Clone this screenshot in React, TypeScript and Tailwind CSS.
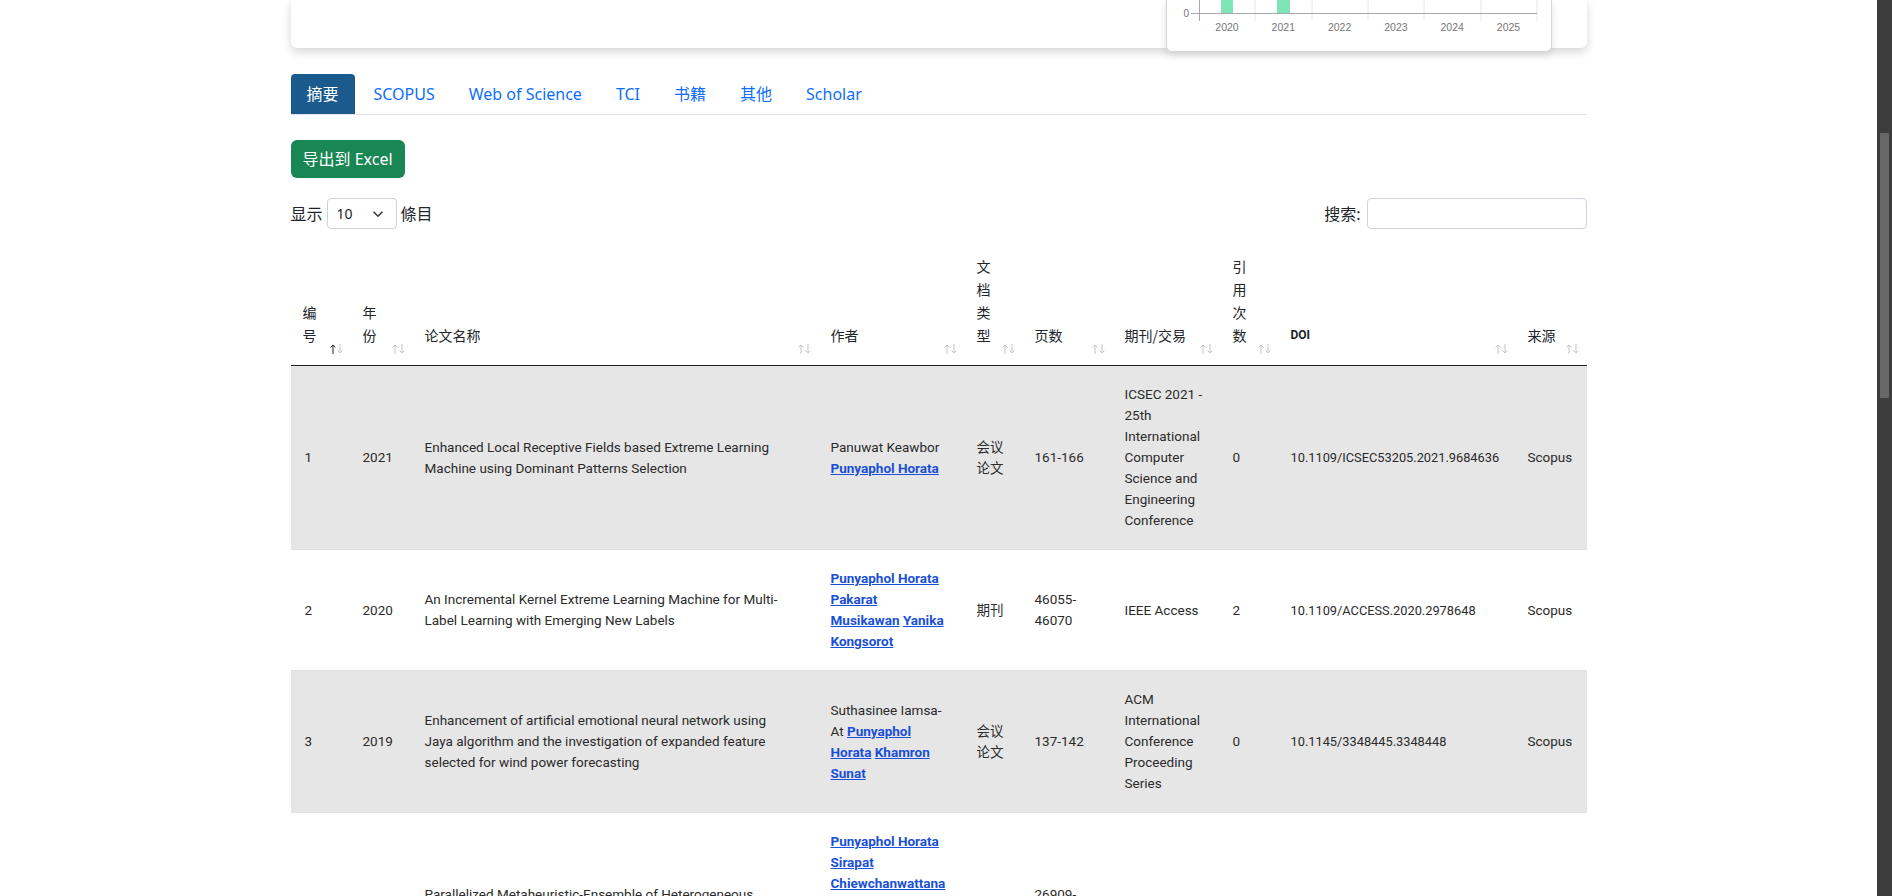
import React from "react";

const UI = "font-['Noto_Sans','Noto_Sans_CJK_SC',sans-serif]";
const BODY = "font-['Roboto','Noto_Sans_CJK_SC',sans-serif]";

function A({ children }: { children: React.ReactNode }) {
  return <a className="font-bold text-[#1a4fd8] underline">{children}</a>;
}

function SortIcon({ active }: { active?: boolean }) {
  return (
    <span className="absolute right-[8px] bottom-[11px] flex gap-[1px]">
      <svg width="6" height="10" viewBox="0 0 6 10" fill="none" strokeWidth="1">
        <path d="M3 10V1M0.6 3.4L3 1l2.4 2.4" stroke={active ? "#222" : "#c4c4c4"} />
      </svg>
      <svg width="6" height="10" viewBox="0 0 6 10" fill="none" strokeWidth="1">
        <path d="M3 0v9M0.6 6.6L3 9l2.4-2.4" stroke="#c4c4c4" />
      </svg>
    </span>
  );
}

function Chart() {
  const grid = [32, 88, 145, 201, 257, 314, 370];
  const years = ["2020", "2021", "2022", "2023", "2024", "2025"];
  return (
    <svg width="384" height="51" viewBox="0 0 384 51">
      {grid.slice(1).map((x) => (
        <line key={x} x1={x} y1="0" x2={x} y2="21" stroke="#e6e6e6" />
      ))}
      <rect x="54" y="0" width="12" height="13" fill="#7ee6b6" />
      <rect x="110" y="0" width="13" height="13" fill="#7ee6b6" />
      <line x1="32.5" y1="0" x2="32.5" y2="21" stroke="#a8a8a8" />
      <line x1="24" y1="13.5" x2="370" y2="13.5" stroke="#a8a8a8" />
      <text x="22" y="17" textAnchor="end" fontSize="10" fill="#777" fontFamily="Liberation Sans, sans-serif">
        0
      </text>
      {years.map((y, i) => (
        <text
          key={y}
          x={60 + i * 56.3}
          y="31"
          textAnchor="middle"
          fontSize="10.5"
          fill="#777"
          fontFamily="Liberation Sans, sans-serif"
        >
          {y}
        </text>
      ))}
    </svg>
  );
}

type Row = {
  no: number;
  year: number;
  title: React.ReactNode;
  authors: React.ReactNode;
  type: React.ReactNode;
  pages: string;
  journal: string;
  cites: number;
  doi: string;
  src: string;
};

const rows: Row[] = [
  {
    no: 1,
    year: 2021,
    title: (
      <>
        Enhanced Local Receptive Fields based Extreme Learning
        <br />
        Machine using Dominant Patterns Selection
      </>
    ),
    authors: (
      <>
        Panuwat Keawbor
        <br />
        <A>Punyaphol Horata</A>
      </>
    ),
    type: "会议论文",
    pages: "161-166",
    journal: "ICSEC 2021 - 25th International Computer Science and Engineering Conference",
    cites: 0,
    doi: "10.1109/ICSEC53205.2021.9684636",
    src: "Scopus",
  },
  {
    no: 2,
    year: 2020,
    title: (
      <>
        An Incremental Kernel Extreme Learning Machine for Multi-
        <br />
        Label Learning with Emerging New Labels
      </>
    ),
    authors: (
      <>
        <A>Punyaphol Horata</A>
        <br />
        <A>
          Pakarat
          <br />
          Musikawan
        </A>{" "}
        <A>
          Yanika
          <br />
          Kongsorot
        </A>
      </>
    ),
    type: "期刊",
    pages: "46055-46070",
    journal: "IEEE Access",
    cites: 2,
    doi: "10.1109/ACCESS.2020.2978648",
    src: "Scopus",
  },
  {
    no: 3,
    year: 2019,
    title: (
      <>
        Enhancement of artificial emotional neural network using
        <br />
        Jaya algorithm and the investigation of expanded feature
        <br />
        selected for wind power forecasting
      </>
    ),
    authors: (
      <>
        Suthasinee Iamsa-
        <br />
        At <A>Punyaphol</A>
        <br />
        <A>Horata</A> <A>Khamron</A>
        <br />
        <A>Sunat</A>
      </>
    ),
    type: "会议论文",
    pages: "137-142",
    journal: "ACM International Conference Proceeding Series",
    cites: 0,
    doi: "10.1145/3348445.3348448",
    src: "Scopus",
  },
  {
    no: 4,
    year: 2020,
    title: (
      <>
        Parallelized Metaheuristic-Ensemble of Heterogeneous
        <br />
        Feature Selection for Student Dropout Prediction
      </>
    ),
    authors: (
      <>
        <A>Punyaphol Horata</A>
        <br />
        <A>Sirapat</A>
        <br />
        <A>Chiewchanwattana</A>
        <br />
        <A>Khamron Sunat</A>
        <br />
        <A>Pakarat</A>
        <br />
        <A>Musikawan Yanika</A>
        <br />
        <A>Kongsorot</A>
      </>
    ),
    type: "期刊",
    pages: "26909-26921",
    journal: "IEEE Access",
    cites: 1,
    doi: "10.1109/ACCESS.2020.2971234",
    src: "Scopus",
  },
];

const cols: { label: React.ReactNode; w: string; active?: boolean }[] = [
  { label: "编号", w: "w-[60px]", active: true },
  { label: "年份", w: "w-[62px]" },
  { label: "论文名称", w: "w-[406px]" },
  { label: "作者", w: "w-[146px]" },
  { label: "文档类型", w: "w-[58px]" },
  { label: "页数", w: "w-[90px]" },
  { label: "期刊/交易", w: "w-[108px]" },
  { label: "引用次数", w: "w-[58px]" },
  { label: <span className={`${BODY} text-[12px] font-bold`}>DOI</span>, w: "w-[237px]" },
  { label: "来源", w: "w-[71px]" },
];

const tabs = ["摘要", "SCOPUS", "Web of Science", "TCI", "书籍", "其他", "Scholar"];

const td = "border-b border-[#dee2e6] px-[12px] py-[18px] align-middle";

export default function App() {
  return (
    <div className="flex h-[896px] w-[1892px] overflow-hidden bg-white text-[#212529]">
      <div className="flex-1 overflow-hidden">
        <div className="mx-auto w-[1296px]">
          {/* top card, scrolled mostly out of view */}
          <div className="flex h-[48px] items-end justify-end rounded-b-md bg-white pr-[35px] shadow-[0_4px_10px_rgba(0,0,0,0.16)]">
            <div className="-mb-[4px] h-[52px] w-[386px] rounded-b-md border border-t-0 border-[#d6d6d6] bg-white shadow-[0_3px_8px_rgba(0,0,0,0.12)]">
              <Chart />
            </div>
          </div>

          {/* tabs */}
          <div className={`mt-[26px] flex border-b border-[#dee2e6] ${UI} text-[16px]`}>
            {tabs.map((t, i) => (
              <div
                key={t}
                className={
                  i === 0
                    ? "flex h-[40px] items-center rounded-t-[4px] bg-[#1b5a8c] px-4 text-white"
                    : i === 1
                      ? "ml-[2px] flex h-[40px] items-center px-[17px] text-[#0d6efd]"
                      : "flex h-[40px] items-center px-[17px] text-[#0d6efd]"
                }
              >
                {t}
              </div>
            ))}
          </div>

          <button
            className={`mt-[25px] flex h-[38px] items-center rounded-md bg-[#198754] px-[12px] text-[16px] text-white ${UI}`}
          >
            导出到 Excel
          </button>

          <div className={`mt-[20px] flex h-[31px] items-center justify-between ${UI} text-[16px]`}>
            <div className="flex items-center gap-[4px]">
              <span>显示</span>
              <div className="flex h-[31px] w-[70px] items-center justify-between rounded-[4px] border border-[#ced4da] pl-[9px] pr-[12px] text-[14px]">
                <span>10</span>
                <svg width="12" height="8" viewBox="0 0 12 8" fill="none">
                  <path d="M1.5 1.8L6 6.2l4.5-4.4" stroke="#343a40" strokeWidth="1.6" />
                </svg>
              </div>
              <span>條目</span>
            </div>
            <div className="flex items-center gap-[6px]">
              <span>搜索:</span>
              <div className="h-[31px] w-[220px] rounded-[4px] border border-[#ced4da]" />
            </div>
          </div>

          <table className={`mt-[16px] w-full table-fixed border-collapse ${BODY}`}>
            <colgroup>
              {cols.map((c, i) => (
                <col key={i} className={c.w} />
              ))}
            </colgroup>
            <thead>
              <tr>
                {cols.map((c, i) => (
                  <th
                    key={i}
                    className="relative border-b border-[#222] pt-[10px] pb-[18px] pl-[12px] pr-[30px] text-left align-bottom font-['Noto_Sans_CJK_SC',sans-serif] text-[14px] font-normal leading-[23px]"
                  >
                    {c.label}
                    <SortIcon active={c.active} />
                  </th>
                ))}
              </tr>
            </thead>
            <tbody className="text-[13.5px] leading-[21px] text-[#2b2b2b]">
              {rows.map((r, i) => (
                <tr key={r.no} className={i % 2 === 0 ? "bg-[#e6e6e6]" : "bg-white"}>
                  <td className="border-b border-[#dee2e6] py-[18px] pl-[14px] pr-[10px] align-middle">{r.no}</td>
                  <td className={td}>{r.year}</td>
                  <td className={td}>{r.title}</td>
                  <td className={td}>{r.authors}</td>
                  <td className={td}>{r.type}</td>
                  <td className={td}>{r.pages}</td>
                  <td className={td}>{r.journal}</td>
                  <td className={td}>{r.cites}</td>
                  <td className={`${td} whitespace-nowrap text-[12.8px]`}>{r.doi}</td>
                  <td className={td}>{r.src}</td>
                </tr>
              ))}
            </tbody>
          </table>
        </div>
      </div>

      {/* page scrollbar */}
      <div className="flex w-[15px] flex-col bg-[#3c3c3c]">
        <div className="mx-auto mt-[133px] h-[265px] w-[9px] rounded-[1px] bg-[#686868]" />
      </div>
    </div>
  );
}
